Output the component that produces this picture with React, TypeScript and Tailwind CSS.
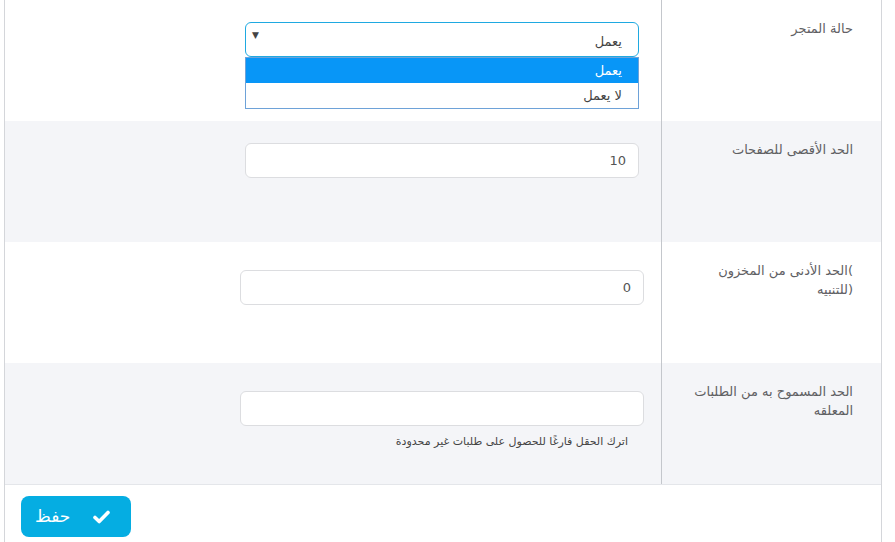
import React from "react";

function Row({ bg, label, children }: { bg: string; label: React.ReactNode; children: React.ReactNode }) {
  return (
    <div className={`flex h-[121px] ${bg}`}>
      <div className="w-[220px] shrink-0 border-l border-[#c4c7cc] pr-[28px] pl-[20px] pt-[19px] text-[13px] leading-[19px] text-[#5f6063]">
        {label}
      </div>
      <div className="flex-1 relative">{children}</div>
    </div>
  );
}

export default function App() {
  return (
    <div
      dir="rtl"
      className="w-[895px] h-[542px] bg-white overflow-hidden"
      style={{ fontFamily: '"DejaVu Sans", "Noto Sans", sans-serif' }}
    >
      <div className="ml-[4px] mr-[13px] border-l border-r border-[#d4d6da] h-[542px]">
        <Row bg="bg-white" label="حالة المتجر">
          <div className="mr-[22px] mt-[22px] w-[394px] relative">
            <div className="h-[35px] rounded-[6px] border border-[#1fa9e1] bg-white flex items-center justify-between pr-[16px] pl-[6px] text-[13px] text-[#444]">
              <span className="mt-[4px]">يعمل</span>
              <span className="text-[9px] text-[#444] -mt-[8px]">▼</span>
            </div>
            <div className="absolute top-[35px] right-0 w-[394px] border border-[#6ea2d8] bg-white text-[13px]">
              <div className="h-[25px] bg-[#0896f7] text-white pr-[16px] flex items-center">يعمل</div>
              <div className="h-[25px] text-[#444] pr-[16px] flex items-center">لا يعمل</div>
            </div>
          </div>
        </Row>
        <Row bg="bg-[#f4f5f8]" label="الحد الأقصى للصفحات">
          <div className="mr-[22px] mt-[22px] w-[394px] h-[35px] rounded-[6px] border border-[#dcdde0] bg-white flex items-center pr-[12px] text-[13px] text-[#555]">
            10
          </div>
        </Row>
        <Row bg="bg-white" label=")الحد الأدنى من المخزون (للتنبيه">
          <div className="mr-[17px] mt-[28px] w-[404px] h-[35px] rounded-[6px] border border-[#dcdde0] bg-white flex items-center pr-[12px] text-[13px] text-[#555]">
            0
          </div>
        </Row>
        <Row bg="bg-[#f4f5f8]" label="الحد المسموح به من الطلبات المعلقه">
          <div className="mr-[17px] mt-[28px] w-[404px]">
            <div className="h-[35px] rounded-[6px] border border-[#dcdde0] bg-white"></div>
            <div className="mt-[8px] pr-[16px] text-[11px] text-[#444]">اترك الحقل فارغًا للحصول على طلبات غير محدودة</div>
          </div>
        </Row>
        <div className="border-t border-[#e4e6ea] flex justify-end pt-[11px] pl-[16px]">
          <button className="w-[110px] h-[41px] rounded-[8px] bg-[#05ade2] text-white flex items-center justify-between pr-[21px] pl-[14px]">
            <svg width="17" height="14" viewBox="0 0 17 14">
              <path d="M2 7.5 L6.2 11.5 L15 2.5" fill="none" stroke="white" strokeWidth="3.6" strokeLinecap="round" strokeLinejoin="round" />
            </svg>
            <span className="text-[17px]">حفظ</span>
          </button>
        </div>
      </div>
    </div>
  );
}
